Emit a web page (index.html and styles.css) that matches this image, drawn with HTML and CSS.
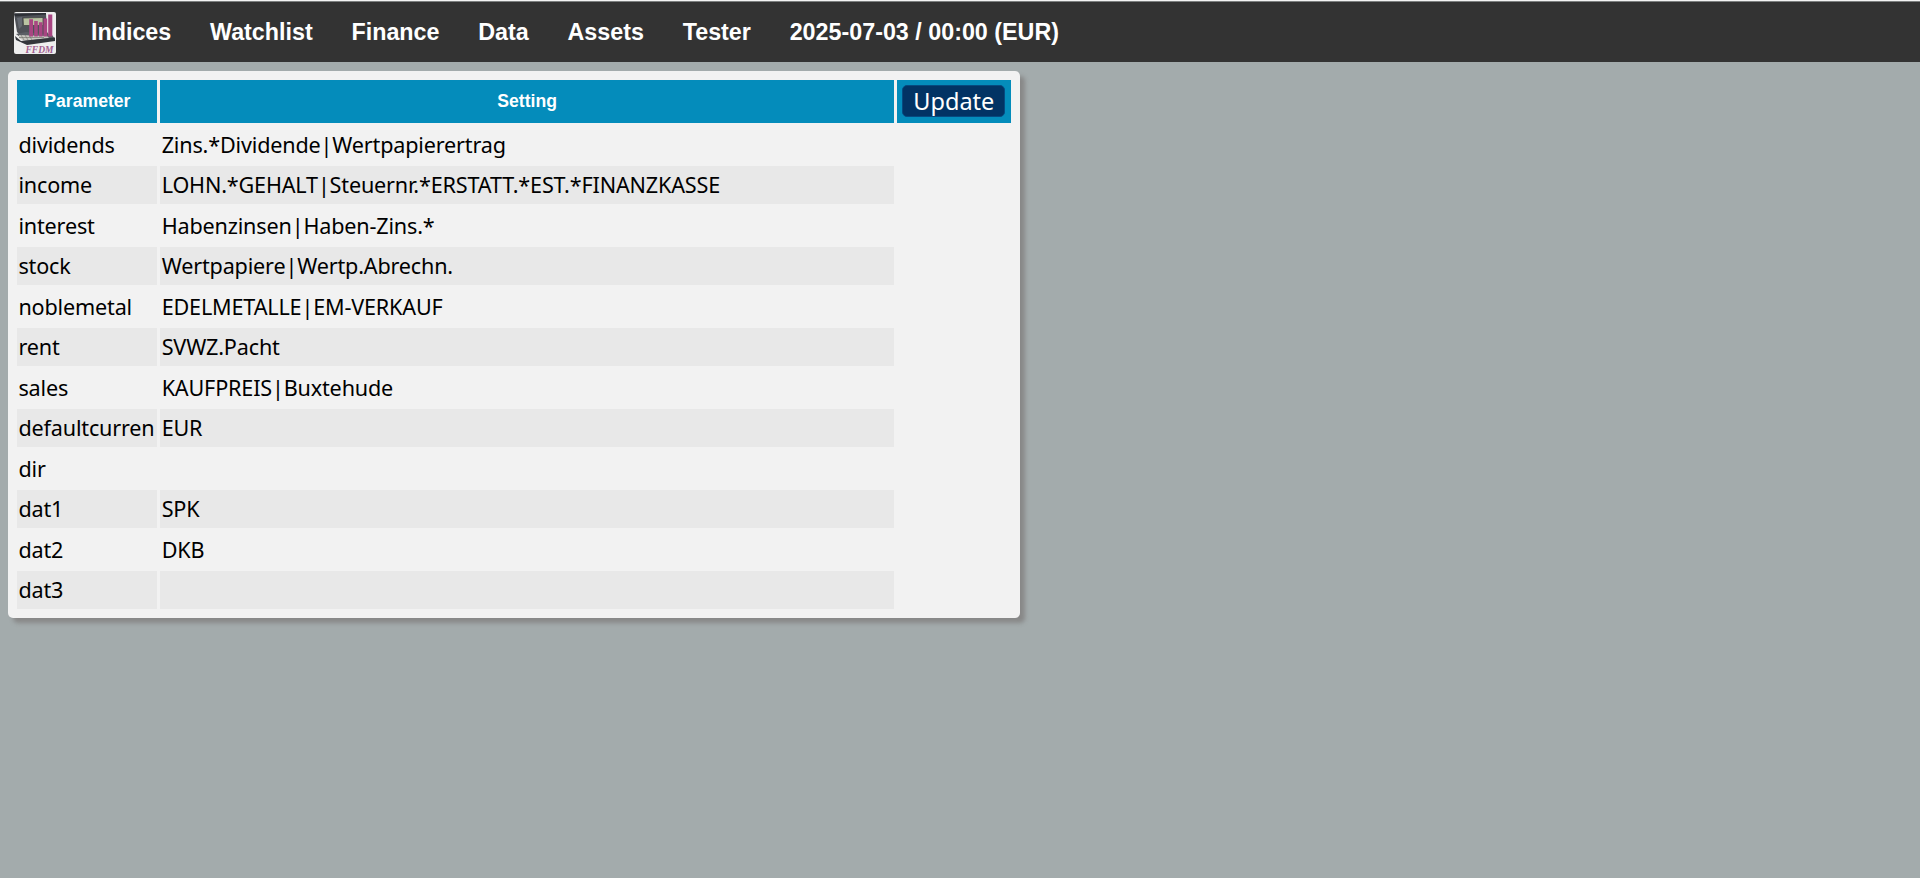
FILE: index.html
```html
<!DOCTYPE html>
<html lang="en">
<head>
<meta charset="utf-8">
<title>FFDM Settings</title>
<link rel="stylesheet" href="styles.css">
</head>
<body>
<nav class="navbar">
  <svg class="logo" viewBox="0 0 42 42" role="img" aria-label="FFDM">
    <rect width="42" height="42" rx="2" fill="#eeeeee"/>
    <path d="M0 1.500L32 1L33 20L36 24L6 23L3 20Z" fill="#4e5157"/>
    <path d="M0 1.500L32 1V2.500L1 4.500Z" fill="#2d3036"/>
    <path d="M3 6L8 5L8 14L5 17Z" fill="#646971"/>
    <path d="M9 6L29 5.500V13.500H9.500Z" fill="#b9c3a2" stroke="#444" stroke-width=".8"/>
    <path d="M2 22L12 20L38 23L41 27L15 32Z" fill="#5b5f65"/>
    <path d="M5 23L33 24L35 26L10 29L5 26Z" fill="#c7c7c2"/>
    <path d="M7 23L10 28M11 23L14 28M15 23L18 28M5 25.500H30" stroke="#777970" stroke-width=".7"/>
    <path d="M1 24L7 29L41 25.500V29L13 33L2 28Z" fill="#33363b"/>
    <path d="M15.200 7.300H19V24.500H15.200ZM20.200 9H23.800V24.500H20.200ZM24.900 10.300H28.500V24.500H24.900ZM29.500 6.500H33.200V24.500H29.500ZM34.200 2.500H38.300V24.500H34.200Z" fill="#a84582"/>
    <text class="logo-text" x="11.500" y="40.500" textLength="28" lengthAdjust="spacingAndGlyphs">FFDM</text>
  </svg>
  <a>Indices</a>
  <a>Watchlist</a>
  <a>Finance</a>
  <a>Data</a>
  <a>Assets</a>
  <a>Tester</a>
  <a>2025-07-03 / 00:00 (EUR)</a>
</nav>
<main class="panel">
  <div class="head">Parameter</div><div class="head">Setting</div><div class="head action"><button class="update">Update</button></div>
  <div class="name">dividends</div><div class="value">Zins.*Dividende|Wertpapierertrag</div>
  <div class="name alt">income</div><div class="value alt">LOHN.*GEHALT|Steuernr.*ERSTATT.*EST.*FINANZKASSE</div>
  <div class="name">interest</div><div class="value">Habenzinsen|Haben-Zins.*</div>
  <div class="name alt">stock</div><div class="value alt">Wertpapiere|Wertp.Abrechn.</div>
  <div class="name">noblemetal</div><div class="value">EDELMETALLE|EM-VERKAUF</div>
  <div class="name alt">rent</div><div class="value alt">SVWZ.Pacht</div>
  <div class="name">sales</div><div class="value">KAUFPREIS|Buxtehude</div>
  <div class="name alt">defaultcurren</div><div class="value alt">EUR</div>
  <div class="name">dir</div><div class="value"></div>
  <div class="name alt">dat1</div><div class="value alt">SPK</div>
  <div class="name">dat2</div><div class="value">DKB</div>
  <div class="name alt">dat3</div><div class="value alt"></div>
</main>
</body>
</html>
```

FILE: styles.css
```css
* { box-sizing: border-box; }
body {
  margin: 0;
  min-height: 878px;
  background: #a3abac;
  border-top: 1px solid #f4f4f4;
  font-family: "Noto Sans", sans-serif;
}
.navbar {
  display: flex;
  align-items: center;
  height: 61px;
  padding-left: 14px;
  border-top: 1px solid #7d8080;
  background: #333333;
  color: #fff;
  font: bold 23.3px/60px "Liberation Sans", Arial, sans-serif;
}
.navbar a { margin-right: 38.750px; white-space: nowrap; }
.logo { width: 42px; height: 42px; margin: 2px 35px 0 0; flex: none; }
.logo-text { font: italic bold 10.500px "Liberation Serif", serif; fill: #a26090; }
.panel {
  display: grid;
  grid-template-columns: 140px 734px 114px;
  grid-template-rows: 43px repeat(12, 37.800px);
  gap: 2.700px;
  width: 1012px;
  height: 547px;
  margin: 9px 0 0 8px;
  padding: 9px 9px 9px 9.400px;
  border-radius: 5px;
  background: #f2f2f2;
  box-shadow: 5px 5px 4px #888;
}
.head {
  display: flex;
  align-items: center;
  justify-content: center;
  background: #048cbb;
  color: #fff;
  font: bold 17.600px "Liberation Sans", Arial, sans-serif;
}
.action { margin: 0 -0.600px 0 0.600px; padding: 0 1px 1px 0; }
.update {
  width: 103px;
  height: 32px;
  padding: 0 0 1px;
  border: 1px solid #064a80;
  border-radius: 5px;
  background: #023364;
  color: #fff;
  font: 23.500px/28px "Noto Sans", sans-serif;
}
.name, .value {
  padding-left: 1.600px;
  overflow: hidden;
  white-space: nowrap;
  color: #000;
  font-size: 21.600px;
  letter-spacing: -0.170px;
  line-height: 37px;
}
.name { grid-column: 1; padding-left: 1px; }
.value { grid-column: 2; }
.alt { background: #e8e8e8; }
```
